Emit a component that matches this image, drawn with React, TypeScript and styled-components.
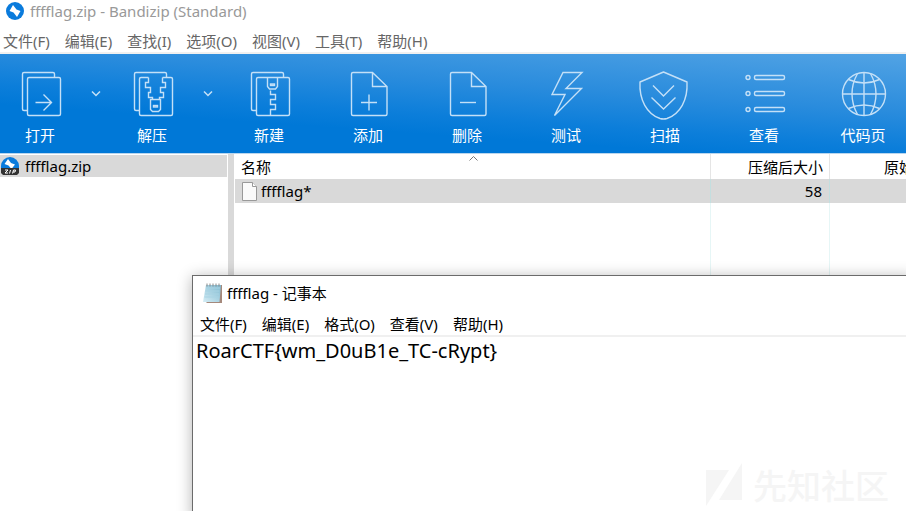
import React from "react";
import styled, { createGlobalStyle } from "styled-components";

const GlobalStyle = createGlobalStyle`
  html, body, #root { height: 100%; }
  body {
    margin: 0;
    overflow: hidden;
    background: #fff;
    color: #000;
    font: 15px/20px "Noto Sans", "Noto Sans CJK SC", sans-serif;
  }
  button { font: inherit; color: inherit; background: none; border: 0; padding: 0; }
`;

const Desktop = styled.div`
  position: relative;
  display: flex;
  flex-direction: column;
  height: 100%;
  overflow: hidden;
`;

const TitleBar = styled.header<{ $muted?: boolean }>`
  display: flex;
  align-items: center;
  gap: ${(p) => (p.$muted ? 6 : 4)}px;
  height: ${(p) => (p.$muted ? 22 : 34)}px;
  padding-left: ${(p) => (p.$muted ? 6 : 9)}px;
  color: ${(p) => (p.$muted ? "#999" : "#000")};
  white-space: nowrap;
`;

const Title = styled.h1`
  margin: 0;
  font-size: 15px;
  font-weight: 400;
`;

const MenuBar = styled.nav<{ $muted?: boolean }>`
  display: flex;
  align-items: center;
  gap: 15px;
  height: ${(p) => (p.$muted ? 32 : 27)}px;
  padding: ${(p) => (p.$muted ? "7px 3px 0" : "3px 7px 0")};
  box-sizing: border-box;
  flex: none;
  border-bottom: 2px solid #f0f0f0;
  color: ${(p) => (p.$muted ? "#666" : "#000")};
`;

const MenuButton = styled.button`
  white-space: nowrap;
`;

const Toolbar = styled.div`
  display: flex;
  flex: none;
  height: 100px;
  box-sizing: border-box;
  padding-top: 16px;
  border-bottom: 1px solid #b9d6ee;
  color: #fff;
  background: linear-gradient(184deg, #52a3e4 0%, #2a8cdd 36%, #0c7eda 58%, #0078d7 70%);
`;

const ToolList = styled.div`
  display: flex;
  align-items: flex-start;
  gap: 19px;
  padding-left: 5px;
`;

const Tool = styled.button`
  display: flex;
  flex-direction: column;
  align-items: center;
  gap: 7px;
  width: 80px;
  height: 76px;
  flex: none;
`;

const ToolIcon = styled.svg`
  width: 48px;
  height: 48px;
  overflow: visible;
  fill: none;
  stroke: #c4e0f7;
  stroke-width: 1.4;
`;

const DropButton = styled.button`
  display: flex;
  width: 32px;
  height: 48px;
  align-items: center;
  justify-content: center;
  flex: none;
`;

const Panes = styled.main`
  display: flex;
  flex: 1;
  min-height: 0;
  overflow: hidden;
`;

const Tree = styled.aside`
  width: 228px;
  flex: none;
  border-right: 6px solid #d9d9d9;
  box-sizing: content-box;
`;

const TreeItem = styled.button`
  display: flex;
  align-items: center;
  gap: 5px;
  width: 227px;
  height: 22px;
  margin-top: 1px;
  && { background: #d9d9d9; }
`;

const FileTable = styled.table`
  flex: 1;
  min-width: 0;
  height: 100%;
  margin: 0 -15px 0 1px;
  table-layout: fixed;
  border-collapse: collapse;
`;

const Head = styled.th<{ $right?: boolean }>`
  height: 25px;
  padding: 0 6px;
  box-sizing: border-box;
  border-right: 1px solid #e5e5e5;
  font-weight: 400;
  text-align: ${(p) => (p.$right ? "right" : "left")};
  white-space: nowrap;
  overflow: hidden;
`;

const HeadContent = styled.div`
  display: flex;
  justify-content: space-between;
  align-items: center;
  position: relative;
`;

const SortMark = styled.svg`
  position: absolute;
  top: -1px;
  left: calc(50% - 4px);
  fill: none;
  stroke: #777;
`;

const Row = styled.tr`
  height: 24px;
  background: #d9d9d9;
`;

const Cell = styled.td<{ $right?: boolean }>`
  padding: 0 7px;
  border-right: 1px solid #c3dedf;
  text-align: ${(p) => (p.$right ? "right" : "left")};
`;

const EmptyCell = styled.td`
  border-right: 1px solid #e6f6f6;
`;

const FileName = styled.span`
  display: flex;
  align-items: center;
  gap: 4px;
`;

const NotepadWindow = styled.section`
  position: absolute;
  left: 192px;
  top: 275px;
  right: -8px;
  bottom: -8px;
  display: flex;
  flex-direction: column;
  border: 1px solid #6b6b6b;
  background: #fff;
  box-shadow: 0 2px 14px rgba(0, 0, 0, 0.3);
`;

const NoteText = styled.textarea`
  flex: 1;
  padding: 1px 3px;
  border: 0;
  outline: 0;
  resize: none;
  background: transparent;
  color: #000;
  font: 20px/26px "Noto Sans", "Noto Sans CJK SC", sans-serif;
`;

const Watermark = styled.div`
  position: absolute;
  right: 17px;
  bottom: 3px;
  display: flex;
  align-items: center;
  gap: 11px;
  color: #f5f5f5;
  font: 500 34px/46px "Noto Sans CJK SC", sans-serif;
  pointer-events: none;
`;

const BackPage = () => <path d="M11.5 40.5H8a1.5 1.5 0 0 1-1.5-1.5V4A1.5 1.5 0 0 1 8 2.5h29A1.5 1.5 0 0 1 38.5 4v3.5" />;
const Sheet = () => <path d="M28.5 2.5H9A1.5 1.5 0 0 0 7.5 4v40A1.5 1.5 0 0 0 9 45.5h32.5a1.5 1.5 0 0 0 1.5-1.5V16.5zM28.5 2.5v14H43" />;

const OpenIcon = () => (
  <ToolIcon viewBox="0 0 48 48">
    <BackPage />
    <rect x="11.5" y="7.5" width="33" height="38" rx="1.5" />
    <path d="M19.5 32.5h16M27.5 24.5l8 8-8 8" />
  </ToolIcon>
);

const ExtractIcon = () => (
  <ToolIcon viewBox="0 0 48 48">
    <BackPage />
    <path d="M20.5 7.5H13A1.5 1.5 0 0 0 11.5 9v35a1.5 1.5 0 0 0 1.5 1.5h30a1.5 1.5 0 0 0 1.5-1.5V9A1.5 1.5 0 0 0 43 7.5h-8.5" />
    <path d="M20.5 7.5v5h-3v5h5v5h-2v5h4v2M34.5 7.5v5h3v5h-5v5h3v5h-4v2" />
    <path d="M22.5 29.5h10v10l-2 2h-6l-2-2z" />
    <rect x="25.5" y="35.5" width="4" height="1.5" />
  </ToolIcon>
);

const NewIcon = () => (
  <ToolIcon viewBox="0 0 48 48">
    <BackPage />
    <rect x="11.5" y="7.5" width="33" height="38" rx="1.5" />
    <path d="M22.5 7.5v9l2 2.5h6l2-2.5v-9M25.5 20.5v4h5v5h-5v5h5v5h-5v6" />
    <rect x="25.5" y="14" width="4" height="1.5" />
  </ToolIcon>
);

const AddIcon = () => (
  <ToolIcon viewBox="0 0 48 48"><Sheet /><path d="M17 32.5h16M25 24.5v16" /></ToolIcon>
);

const DeleteIcon = () => (
  <ToolIcon viewBox="0 0 48 48"><Sheet /><path d="M17 32.5h16" /></ToolIcon>
);

const TestIcon = () => (
  <ToolIcon viewBox="0 0 48 48"><path d="M21 2.5h19L24 18.5h15.5L12.5 45.5 23 24.5H10z" /></ToolIcon>
);

const ScanIcon = () => (
  <ToolIcon viewBox="0 0 48 48">
    <path d="M22.5 2L-1 12C-2 30 6 44 19 48.5q3.500 1 7 0C39 44 47 30 46 12z" strokeLinejoin="round" />
    <path d="M12 15.5l10.5 10.5L33 15.5M10.5 27.5l12 11.5 12-11.5" />
  </ToolIcon>
);

const ViewIcon = () => (
  <ToolIcon viewBox="0 0 48 48">
    {[7.5, 23.5, 39.5].map((y) => (
      <g key={y}>
        <circle cx="8" cy={y} r="2" />
        <rect x="14.5" y={y - 2} width="30" height="4" rx="1.5" />
      </g>
    ))}
  </ToolIcon>
);

const GlobeIcon = () => (
  <ToolIcon viewBox="0 0 48 48">
    <circle cx="25" cy="24" r="21.5" />
    <path d="M25 2.5v43M3.5 24h43" />
    <path d="M18.5 3.5q-5.5 10-5.5 20.5t5.5 20.5M31.5 3.5q5.5 10 5.5 20.5t-5.5 20.5M9.5 9.5q15.5 7 31 0M9.5 38.5q15.5-7 31 0" />
  </ToolIcon>
);

const BandizipLogo = () => (
  <svg width="18" height="18" viewBox="0 0 18 18" aria-hidden="true">
    <circle cx="9" cy="9" r="9" fill="#0a7bdc" />
    <path d="M7 3l3.500 4.500 4 1.500-3.500 6-3.500-4.500-4-1.500z" fill="#fff" />
  </svg>
);

const ZipIcon = () => (
  <svg width="20" height="20" viewBox="0 0 20 20" aria-hidden="true">
    <path d="M1 13V10a9 9 0 0 1 18 0v3z" fill="#0a7bdc" />
    <path d="M8 3l3 4 4 1.500-3.500 4.500-3-3.500-4-1.500z" fill="#fff" />
    <path d="M1 12h18v5l-2 2H3l-2-2z" fill="#333" />
    <path d="M5 14h3l-3 3h3M10.5 14l-1 3.5M12.5 17.5l1-3.5h2l-.5 2h-2" fill="none" stroke="#fff" />
  </svg>
);

const DocumentIcon = () => (
  <svg width="15" height="19" viewBox="0 0 15 19" aria-hidden="true">
    <path d="M.5.5h10l4 4v14H.5z" fill="#fafafa" stroke="#999" />
    <path d="M10.5.5v4h4" fill="#fff" stroke="#999" />
  </svg>
);

const NotepadIcon = () => (
  <svg width="21" height="21" viewBox="0 0 21 21" aria-hidden="true">
    <defs>
      <linearGradient id="pad" x1="0" y1="1" x2="1" y2="0">
        <stop offset="0" stopColor="#d5edf5" />
        <stop offset="1" stopColor="#7fb9d0" />
      </linearGradient>
    </defs>
    <path d="M17 2h3v18H5l-1-1z" fill="#a5897c" />
    <path d="M4 2h15l-1.5 17H1z" fill="url(#pad)" />
    <path d="M4 5h14M3.5 8h14M3 11h14M2.5 14h14" stroke="#a8d3e3" />
    <path d="M5 .5v3M8 .5v3M11 .5v3M14 .5v3M17 .5v3" stroke="#8a8a8a" />
  </svg>
);

const DropArrow = ({ label }: { label: string }) => (
  <DropButton aria-label={label}>
    <svg width="10" height="6" viewBox="0 0 10 6" fill="none" stroke="#c4e0f7" strokeWidth="1.5">
      <path d="M1 .5l4 4 4-4" />
    </svg>
  </DropButton>
);

const tools: [string, React.FC][] = [
  ["新建", NewIcon],
  ["添加", AddIcon],
  ["删除", DeleteIcon],
  ["测试", TestIcon],
  ["扫描", ScanIcon],
  ["查看", ViewIcon],
  ["代码页", GlobeIcon],
];

const archiveMenus = ["文件(F)", "编辑(E)", "查找(I)", "选项(O)", "视图(V)", "工具(T)", "帮助(H)"];
const notepadMenus = ["文件(F)", "编辑(E)", "格式(O)", "查看(V)", "帮助(H)"];

export default function App() {
  return (
    <>
      <GlobalStyle />
      <Desktop>
        <TitleBar $muted>
          <BandizipLogo />
          <Title>fffflag.zip - Bandizip (Standard)</Title>
        </TitleBar>
        <MenuBar $muted>
          {archiveMenus.map((m) => <MenuButton key={m}>{m}</MenuButton>)}
        </MenuBar>
        <Toolbar>
          <Tool><OpenIcon />打开</Tool>
          <DropArrow label="打开选项" />
          <Tool><ExtractIcon />解压</Tool>
          <DropArrow label="解压选项" />
          <ToolList>
            {tools.map(([label, Icon]) => <Tool key={label}><Icon />{label}</Tool>)}
          </ToolList>
        </Toolbar>
        <Panes>
          <Tree>
            <TreeItem><ZipIcon />fffflag.zip</TreeItem>
          </Tree>
          <FileTable>
            <colgroup>
              <col />
              <col width="119" />
              <col width="91" />
            </colgroup>
            <thead>
              <tr>
                <Head>
                  <HeadContent>
                    名称
                    <SortMark width="9" height="5" viewBox="0 0 9 5"><path d="M.5 4.5l4-4 4 4" /></SortMark>
                  </HeadContent>
                </Head>
                <Head $right>压缩后大小</Head>
                <Head $right>原始</Head>
              </tr>
            </thead>
            <tbody>
              <Row>
                <Cell><FileName><DocumentIcon />fffflag*</FileName></Cell>
                <Cell $right>58</Cell>
                <Cell />
              </Row>
              <tr><EmptyCell /><EmptyCell /><EmptyCell /></tr>
            </tbody>
          </FileTable>
        </Panes>
        <NotepadWindow>
          <TitleBar>
            <NotepadIcon />
            <Title>fffflag - 记事本</Title>
          </TitleBar>
          <MenuBar>
            {notepadMenus.map((m) => <MenuButton key={m}>{m}</MenuButton>)}
          </MenuBar>
          <NoteText aria-label="文本" spellCheck={false} defaultValue="RoarCTF{wm_D0uB1e_TC-cRypt}" />
        </NotepadWindow>
        <Watermark>
          <svg width="36" height="44" viewBox="0 0 36 44" fill="currentColor" aria-hidden="true">
            <path d="M0 7h23L0 43zM36 0v37H13z" />
          </svg>
          先知社区
        </Watermark>
      </Desktop>
    </>
  );
}
